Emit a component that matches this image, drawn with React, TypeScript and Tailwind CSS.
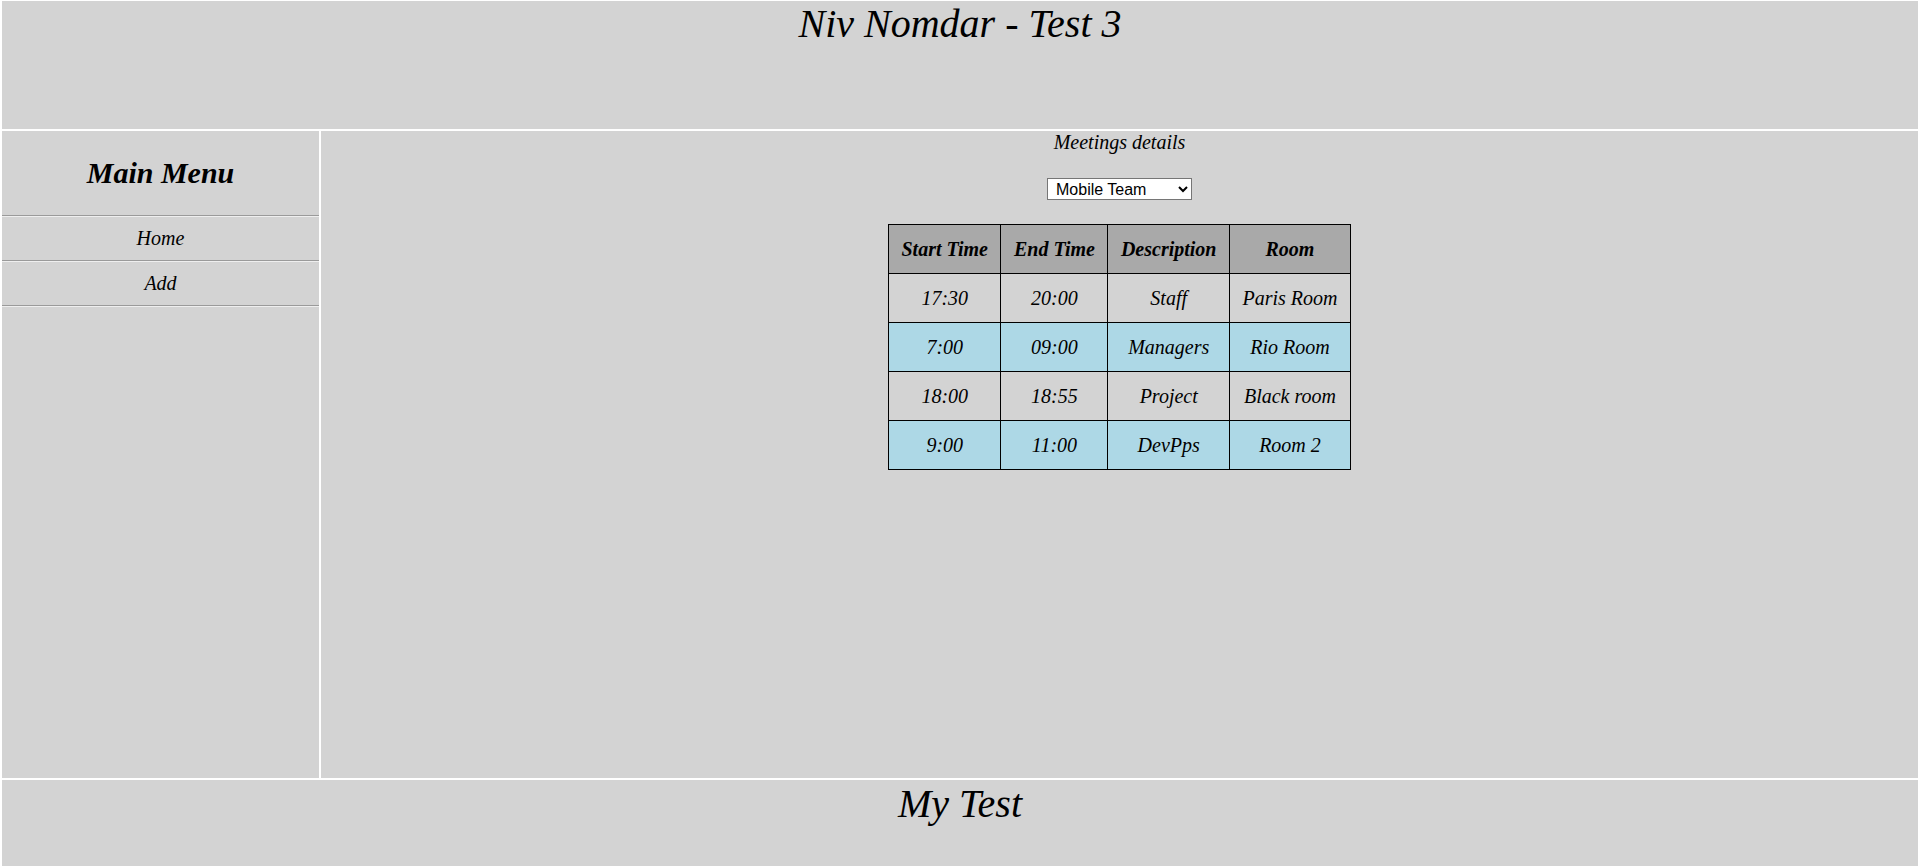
import * as React from "react";
import { useState } from "react";

type Meeting = {
  start: string;
  end: string;
  description: string;
  room: string;
};

const meetings: Meeting[] = [
  { start: "17:30", end: "20:00", description: "Staff", room: "Paris Room" },
  { start: "7:00", end: "09:00", description: "Managers", room: "Rio Room" },
  { start: "18:00", end: "18:55", description: "Project", room: "Black room" },
  { start: "9:00", end: "11:00", description: "DevPps", room: "Room 2" },
];

const teams = ["Mobile Team", "Web Team", "Backend Team", "QA Team"];

// Inset style separator, like a plain <hr>
const Divider = () => (
  <div className="border-t border-b border-t-[#9a9a9a] border-b-[#eeeeee]" />
);

const Sidebar = () => {
  const items = ["Home", "Add"];
  return (
    <aside className="bg-[#d3d3d3]">
      <h2 className="mt-[25px] mb-[26px] text-center text-[30px] font-bold leading-[33px]">
        Main Menu
      </h2>
      <Divider />
      {items.map((item) => (
        <React.Fragment key={item}>
          <div className="py-[10px] text-center text-[20px] leading-[23px] cursor-pointer">
            {item}
          </div>
          <Divider />
        </React.Fragment>
      ))}
    </aside>
  );
};

const MeetingsTable = ({ rows }: { rows: Meeting[] }) => {
  const headers = ["Start Time", "End Time", "Description", "Room"];
  return (
    <table className="mx-auto border-collapse border border-black text-[20px] leading-[23px]">
      <thead>
        <tr className="bg-[#a9a9a9]">
          {headers.map((h) => (
            <th
              key={h}
              className="border border-black px-[12.5px] py-[12.5px] font-bold text-center"
            >
              {h}
            </th>
          ))}
        </tr>
      </thead>
      <tbody>
        {rows.map((m, i) => (
          <tr
            key={m.start + m.room}
            className={i % 2 === 0 ? "bg-[#d3d3d3]" : "bg-[#add8e6]"}
          >
            <td className="border border-black px-[12.5px] py-[12.5px] text-center">
              {m.start}
            </td>
            <td className="border border-black px-[12.5px] py-[12.5px] text-center">
              {m.end}
            </td>
            <td className="border border-black px-[12.5px] py-[12.5px] text-center">
              {m.description}
            </td>
            <td className="border border-black px-[12.5px] py-[12.5px] text-center">
              {m.room}
            </td>
          </tr>
        ))}
      </tbody>
    </table>
  );
};

export default function App() {
  const [team, setTeam] = useState(teams[0]);

  return (
    <div
      className="grid h-[867px] grid-cols-[317px_1fr] grid-rows-[128px_647px_86px] gap-[2px] bg-white pt-[1px] pb-[1px] px-[2px] italic text-black"
      style={{ fontFamily: '"Liberation Serif", "Times New Roman", serif' }}
    >
      {/* Header */}
      <header className="col-span-2 bg-[#d3d3d3]">
        <h1 className="m-0 pt-[1px] text-center text-[40px] font-normal leading-[44px]">
          Niv Nomdar - Test 3
        </h1>
      </header>

      <Sidebar />

      {/* Main content */}
      <main className="bg-[#d3d3d3]">
        <p className="m-0 text-center text-[20px] leading-[23px]">
          Meetings details
        </p>
        <div className="mt-[24px] mb-[24px] flex justify-center">
          <select
            value={team}
            onChange={(e) => setTeam(e.target.value)}
            className="h-[22px] w-[145px] border border-[#767676] bg-white pl-[4px] text-[16px] not-italic text-black"
            style={{ fontFamily: '"Liberation Sans", Arial, sans-serif' }}
          >
            {teams.map((t) => (
              <option key={t} value={t}>
                {t}
              </option>
            ))}
          </select>
        </div>
        <MeetingsTable rows={meetings} />
      </main>

      {/* Footer */}
      <footer className="col-span-2 bg-[#d3d3d3]">
        <h1 className="m-0 pt-[2px] text-center text-[40px] font-normal leading-[44px]">
          My Test
        </h1>
      </footer>
    </div>
  );
}
